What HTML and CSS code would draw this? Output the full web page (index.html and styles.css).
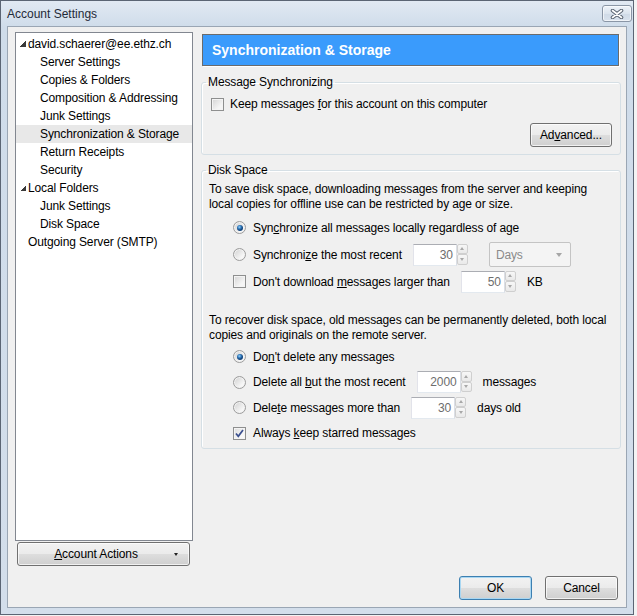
FILE: index.html
```html
<!DOCTYPE html>
<html>
    <head>
        <title>Account Settings</title>
        <link rel="stylesheet" href="styles.css">
    </head>
    <body>
        <div class="window">

            <div class="titlebar">
                <span class="title">Account Settings</span>
                <span class="close-btn">
                    <svg width="14" height="10" viewBox="0 0 14 10">
                        <path d="M2.5 1.5 L11.5 8.5 M11.5 1.5 L2.5 8.5" stroke="#5a6472" stroke-width="3.6" stroke-linecap="round"/>
                        <path d="M2.5 1.5 L11.5 8.5 M11.5 1.5 L2.5 8.5" stroke="#ffffff" stroke-width="1.6" stroke-linecap="round"/>
                    </svg>
                </span>
            </div>

            <div class="client">
                <div class="main">

                    <div class="sidebar">
                        <ul class="tree">
                            <li class="row top"><span class="twisty"></span>david.schaerer@ee.ethz.ch</li>
                            <li class="row child">Server Settings</li>
                            <li class="row child">Copies &amp; Folders</li>
                            <li class="row child">Composition &amp; Addressing</li>
                            <li class="row child">Junk Settings</li>
                            <li class="row child selected">Synchronization &amp; Storage</li>
                            <li class="row child">Return Receipts</li>
                            <li class="row child">Security</li>
                            <li class="row top"><span class="twisty"></span>Local Folders</li>
                            <li class="row child">Junk Settings</li>
                            <li class="row child">Disk Space</li>
                            <li class="row leaf">Outgoing Server (SMTP)</li>
                        </ul>
                        <button class="btn actions-btn">
                            <span class="actions-label"><u>A</u>ccount Actions</span>
                            <span class="menu-arrow"></span>
                        </button>
                    </div>

                    <div class="panel">
                        <div class="panel-header">Synchronization &amp; Storage</div>

                        <fieldset class="group group-sync">
                            <legend>Message Synchronizing</legend>
                            <div class="option">
                                <span class="checkbox"></span>
                                <span>Keep messages <u>f</u>or this account on this computer</span>
                            </div>
                            <div class="group-actions">
                                <button class="btn advanced-btn">Ad<u>v</u>anced...</button>
                            </div>
                        </fieldset>

                        <fieldset class="group group-disk">
                            <legend>Disk Space</legend>
                            <p class="note first-note">To save disk space, downloading messages from the server and keeping<br>local copies for offline use can be restricted by age or size.</p>

                            <div class="option-row wide">
                                <span class="radio checked"></span>
                                <span>Syn<u>c</u>hronize all messages locally regardless of age</span>
                            </div>
                            <div class="option-row wide">
                                <span class="radio"></span>
                                <span>Synchroni<u>z</u>e the most recent</span>
                                <span class="spin">
                                    <span class="spin-field">30</span>
                                    <span class="spin-arrows"><span class="spin-btn up"></span><span class="spin-btn down"></span></span>
                                </span>
                                <span class="select">Days<span class="select-arrow"></span></span>
                            </div>
                            <div class="option-row wide">
                                <span class="checkbox"></span>
                                <span>Don't download <u>m</u>essages larger than</span>
                                <span class="spin">
                                    <span class="spin-field">50</span>
                                    <span class="spin-arrows"><span class="spin-btn up"></span><span class="spin-btn down"></span></span>
                                </span>
                                <span>KB</span>
                            </div>

                            <p class="note second-note">To recover disk space, old messages can be permanently deleted, both local<br>copies and originals on the remote server.</p>

                            <div class="option-row short">
                                <span class="radio checked"></span>
                                <span>Do<u>n</u>'t delete any messages</span>
                            </div>
                            <div class="option-row">
                                <span class="radio"></span>
                                <span>Delete all <u>b</u>ut the most recent</span>
                                <span class="spin">
                                    <span class="spin-field">2000</span>
                                    <span class="spin-arrows"><span class="spin-btn up"></span><span class="spin-btn down"></span></span>
                                </span>
                                <span>messages</span>
                            </div>
                            <div class="option-row short">
                                <span class="radio"></span>
                                <span>Dele<u>t</u>e messages more than</span>
                                <span class="spin">
                                    <span class="spin-field">30</span>
                                    <span class="spin-arrows"><span class="spin-btn up"></span><span class="spin-btn down"></span></span>
                                </span>
                                <span>days old</span>
                            </div>
                            <div class="option-row">
                                <span class="checkbox checked">
                                    <svg width="11" height="11" viewBox="0 0 11 11">
                                        <path d="M2 5.5 L4.3 8.3 L9 2" fill="none" stroke="#3a4f8e" stroke-width="1.7"/>
                                    </svg>
                                </span>
                                <span>Always <u>k</u>eep starred messages</span>
                            </div>
                        </fieldset>
                    </div>

                </div>

                <div class="footer">
                    <button class="btn dialog-btn default">OK</button>
                    <button class="btn dialog-btn">Cancel</button>
                </div>
            </div>

        </div>
    </body>
</html>
```

FILE: styles.css
```css
body {
    margin: 0;
    background-color: #f3f3f3;
    font-family: "Liberation Sans", Arial, sans-serif;
    font-size: 12px;
    color: #000;
}

/* Window frame */
.window {
    width: 634px;
    height: 615px;
    box-sizing: border-box;
    border: 1px solid #5b6574;
    background: linear-gradient(#e1e9f3, #cfdcea 26px, #d3deeb);
    padding: 0 6px 6px 6px;
    display: flex;
    flex-direction: column;
}

.titlebar {
    height: 25px;
    margin: 0 -5px 0 -6px;
    padding-left: 6px;
    display: flex;
    align-items: flex-start;
    justify-content: space-between;
}

.title {
    margin-top: 6px;
    color: #1f2a38;
}

.close-btn {
    margin-top: 4px;
    width: 30px;
    height: 17px;
    box-sizing: border-box;
    border: 1px solid #8a96a6;
    border-radius: 3px;
    background: linear-gradient(#eef3f9, #dbe4ee 50%, #cfdae7 51%, #d9e2ed);
    box-shadow: inset 0 0 0 1px rgba(255, 255, 255, 0.6);
    display: flex;
    align-items: center;
    justify-content: center;
}

.client {
    flex: 1;
    background-color: #f0f0f0;
    border: 1px solid #9aa6b4;
    padding: 5px 5px 7px 7px;
    letter-spacing: -0.12px;
    display: flex;
    flex-direction: column;
}

.main {
    flex: 1;
    display: flex;
    gap: 8px;
}

/* Left tree */
.sidebar {
    width: 178px;
    flex-shrink: 0;
    display: flex;
    flex-direction: column;
}

.tree {
    flex: 1;
    margin: 0;
    padding: 2px 0 0 0;
    list-style: none;
    background-color: #fff;
    border: 1px solid #828790;
}

.row {
    height: 18px;
    line-height: 18px;
    white-space: nowrap;
    display: flex;
    align-items: center;
}

.row.top {
    padding-left: 4px;
}

.row.child {
    padding-left: 24px;
}

.row.leaf {
    padding-left: 12px;
}

.row.selected {
    background-color: #e8e8e8;
}

.twisty {
    width: 6px;
    height: 6px;
    margin-right: 2px;
    background: linear-gradient(135deg, transparent 50%, #3a3a3a 50%);
}

.btn {
    font: inherit;
    letter-spacing: inherit;
    color: #000;
    padding: 0;
    box-sizing: border-box;
    border: 1px solid #707070;
    border-radius: 3px;
    background: linear-gradient(#f2f2f2 0%, #ebebeb 48%, #dddddd 52%, #cfcfcf 100%);
    box-shadow: inset 0 0 0 1px rgba(255, 255, 255, 0.7);
    display: flex;
    align-items: center;
    justify-content: center;
}

.actions-btn {
    height: 24px;
    margin: 1px 3px 0 2px;
}

.actions-label {
    flex: 1;
    text-align: center;
}

.menu-arrow {
    width: 0;
    height: 0;
    margin-right: 11px;
    border-left: 2.5px solid transparent;
    border-right: 2.5px solid transparent;
    border-top: 3px solid #222;
}

/* Right panel */
.panel {
    flex: 1;
    min-width: 0;
    display: flex;
    flex-direction: column;
}

.panel-header {
    height: 32px;
    margin: 2px 2px 0 1px;
    box-sizing: border-box;
    border: 1px solid #6b6b6b;
    box-shadow: 1px 1px 0 #fff;
    background-color: #3a9bfc;
    color: #fff;
    font-weight: bold;
    font-size: 14px;
    letter-spacing: 0;
    padding-left: 9px;
    display: flex;
    align-items: center;
}

.group {
    margin: 0;
    min-width: 0;
    border: 1px solid #d5dfe5;
    border-radius: 3px;
    box-shadow: inset 1px 1px 0 #fff;
}

.group legend {
    padding: 0 2px;
    line-height: 16px;
}

.group-sync {
    margin-top: 8px;
    padding: 0 8px 7px 9px;
}

.group-sync legend {
    margin-left: -5px;
}

.option {
    margin-top: 4px;
    height: 20px;
    display: flex;
    align-items: center;
}

.option .checkbox {
    margin-right: 6px;
}

.group-actions {
    margin-top: 9px;
    display: flex;
    justify-content: flex-end;
}

.advanced-btn {
    width: 82px;
    height: 24px;
}

.group-disk {
    margin-top: 7px;
    padding: 0 8px 2px 7px;
}

.group-disk legend {
    margin-left: -3px;
}

.note {
    margin: 0;
    line-height: 15px;
    white-space: nowrap;
}

.first-note {
    margin: 4px 0 2px 0;
}

.second-note {
    margin: 18px 0 1px 0;
}

.option-row {
    height: 26px;
    padding-left: 24px;
    white-space: nowrap;
    display: flex;
    align-items: center;
}

.option-row.wide {
    height: 27px;
}

.option-row.short {
    height: 25px;
}

.option-row .radio,
.option-row .checkbox {
    margin-right: 7px;
}

/* Check boxes and radio buttons */
.checkbox {
    width: 13px;
    height: 13px;
    box-sizing: border-box;
    border: 1px solid #8e8f8f;
    background: linear-gradient(135deg, #d4d4d4, #f5f5f5 70%);
    box-shadow: inset 0 0 0 1px #f4f4f4;
    display: flex;
    align-items: center;
    justify-content: center;
    flex-shrink: 0;
}

.checkbox.checked {
    background: linear-gradient(135deg, #dcdcdc, #f7f7f7 70%);
}

.radio {
    width: 13px;
    height: 13px;
    box-sizing: border-box;
    border-radius: 50%;
    border: 1px solid #9c9c9c;
    background: linear-gradient(135deg, #d0d0d0, #f8f8f8 75%);
    box-shadow: inset 0 0 0 1px #f2f2f2;
    flex-shrink: 0;
    display: flex;
    align-items: center;
    justify-content: center;
}

.radio.checked::after {
    content: "";
    width: 6px;
    height: 6px;
    border-radius: 50%;
    background: radial-gradient(circle at 40% 35%, #9fd3f7 0, #3b86c8 1.5px, #14467e 3px);
}

/* Spin boxes */
.spin {
    margin: 0 11px;
    display: flex;
    align-items: flex-start;
}

.spin-field {
    width: 44px;
    height: 22px;
    box-sizing: border-box;
    border: 1px solid;
    border-color: #abadb3 #dbdfe6 #e3e9ef #e2e3ea;
    background-color: #fff;
    color: #6d6d6d;
    padding-right: 3px;
    display: flex;
    align-items: center;
    justify-content: flex-end;
}

.spin-arrows {
    width: 11px;
    height: 21px;
    display: flex;
    flex-direction: column;
}

.spin-btn {
    flex: 1;
    border: 1px solid #cfcfcf;
    border-radius: 2px;
    background: linear-gradient(#f7f7f7, #e9e9e9);
    display: flex;
    align-items: center;
    justify-content: center;
}

.spin-btn::after {
    content: "";
    width: 0;
    height: 0;
    border-left: 2.5px solid transparent;
    border-right: 2.5px solid transparent;
}

.spin-btn.up::after {
    border-bottom: 3px solid #a8a8a8;
}

.spin-btn.down::after {
    border-top: 3px solid #a8a8a8;
}

.select {
    width: 82px;
    height: 25px;
    margin-left: 10px;
    box-sizing: border-box;
    border: 1px solid #c4c4c4;
    border-radius: 2px;
    background-color: #f4f4f4;
    color: #8a8a8a;
    padding: 0 8px 0 6px;
    display: flex;
    align-items: center;
    justify-content: space-between;
}

.select-arrow {
    width: 0;
    height: 0;
    border-left: 3.5px solid transparent;
    border-right: 3.5px solid transparent;
    border-top: 4px solid #a6a6a6;
}

/* Dialog buttons */
.footer {
    margin-top: 10px;
    margin-right: 3px;
    display: flex;
    justify-content: flex-end;
    gap: 13px;
}

.dialog-btn {
    width: 73px;
    height: 24px;
}

.dialog-btn.default {
    border-color: #3c7fb1;
    box-shadow: inset 0 0 0 1px #a9d7f2;
}
```
